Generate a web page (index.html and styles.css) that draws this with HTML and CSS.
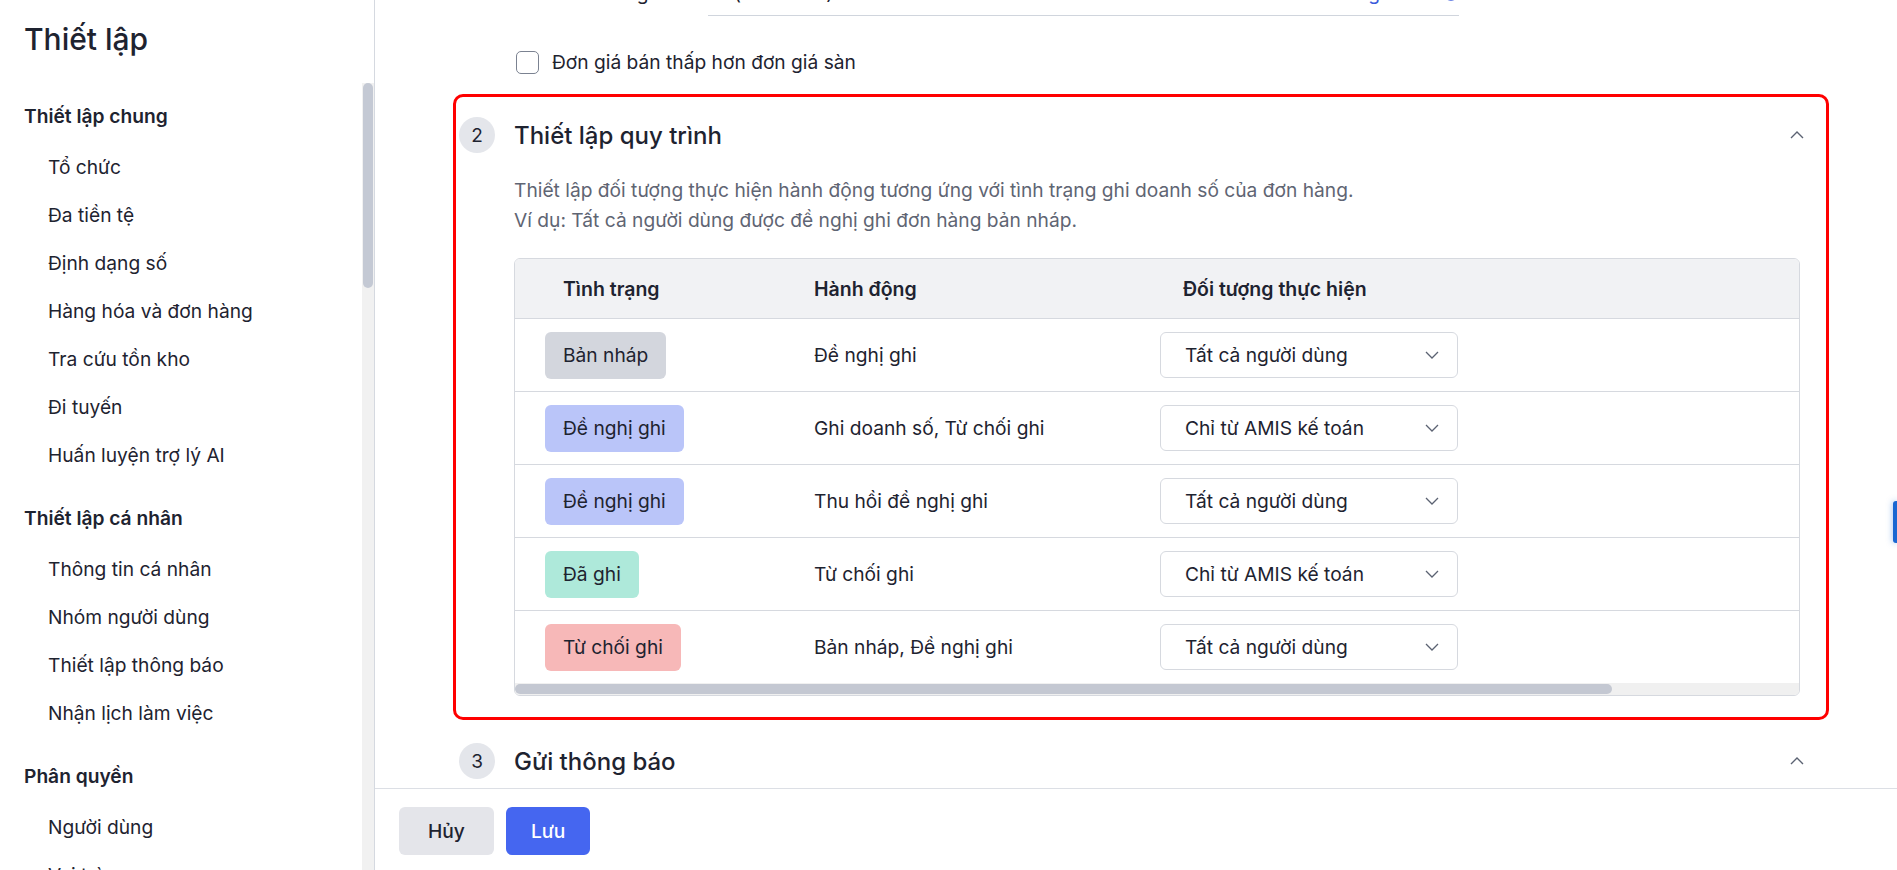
FILE: index.html
```html
<!DOCTYPE html>
<html lang="vi">

<head>
	<meta charset="utf-8">
	<title>Thiết lập</title>
	<link rel="stylesheet" href="styles.css">
</head>

<body>
	<div class="app">
		<aside class="sidebar">
			<h1 class="sidebar-title">Thiết lập</h1>
			<div class="menu-box">
				<nav class="menu">
					<div class="menu-group">
						<div class="menu-head">Thiết lập chung</div>
						<a class="menu-item">Tổ chức</a>
						<a class="menu-item">Đa tiền tệ</a>
						<a class="menu-item">Định dạng số</a>
						<a class="menu-item">Hàng hóa và đơn hàng</a>
						<a class="menu-item">Tra cứu tồn kho</a>
						<a class="menu-item">Đi tuyến</a>
						<a class="menu-item">Huấn luyện trợ lý AI</a>
					</div>
					<div class="menu-group">
						<div class="menu-head">Thiết lập cá nhân</div>
						<a class="menu-item">Thông tin cá nhân</a>
						<a class="menu-item">Nhóm người dùng</a>
						<a class="menu-item">Thiết lập thông báo</a>
						<a class="menu-item">Nhận lịch làm việc</a>
					</div>
					<div class="menu-group">
						<div class="menu-head">Phân quyền</div>
						<a class="menu-item">Người dùng</a>
						<a class="menu-item">Vai trò</a>
					</div>
				</nav>
				<div class="vscroll"><div class="vscroll-thumb"></div></div>
			</div>
		</aside>

		<main class="main">
			<div class="content">
				<div class="field-row">
					<span class="field-label">Kiểm tra đơn giá</span>
					<div class="field-input">
						<span>(theo ĐVT)</span>
						<span class="field-link">Cách tính giá sàn
							<svg width="16" height="16" viewBox="0 0 16 16">
								<circle cx="8" cy="8" r="7" fill="none" stroke="#3b5bdb" stroke-width="1.5" />
							</svg>
						</span>
					</div>
				</div>

				<label class="check-row">
					<span class="checkbox"></span>
					Đơn giá bán thấp hơn đơn giá sàn
				</label>

				<section class="step step-active">
					<div class="step-head">
						<span class="step-num">2</span>
						<h2 class="step-title">Thiết lập quy trình</h2>
						<svg class="step-toggle" width="16" height="10" viewBox="0 0 16 10">
							<path d="M2 8 L8 2 L14 8" fill="none" stroke="#5b6272" stroke-width="1.4" />
						</svg>
					</div>
					<p class="step-desc">Thiết lập đối tượng thực hiện hành động tương ứng với tình trạng ghi doanh số của đơn hàng.<br>Ví dụ: Tất cả người dùng được đề nghị ghi đơn hàng bản nháp.</p>

					<div class="table-wrap">
						<div class="table-view">
							<table class="flow-table">
								<colgroup>
									<col class="col-status">
									<col class="col-action">
									<col class="col-actor">
								</colgroup>
								<thead>
									<tr>
										<th class="th-status">Tình trạng</th>
										<th>Hành động</th>
										<th class="th-actor">Đối tượng thực hiện</th>
									</tr>
								</thead>
								<tbody>
									<tr>
										<td><div class="cell"><span class="badge badge-draft">Bản nháp</span></div></td>
										<td><div class="cell">Đề nghị ghi</div></td>
										<td><div class="cell"><div class="select">Tất cả người dùng<svg width="14" height="8" viewBox="0 0 14 8"><path d="M1 1 L7 7 L13 1" fill="none" stroke="#5b6272" stroke-width="1.3" /></svg></div></div></td>
									</tr>
									<tr>
										<td><div class="cell"><span class="badge badge-pending">Đề nghị ghi</span></div></td>
										<td><div class="cell">Ghi doanh số, Từ chối ghi</div></td>
										<td><div class="cell"><div class="select">Chỉ từ AMIS kế toán<svg width="14" height="8" viewBox="0 0 14 8"><path d="M1 1 L7 7 L13 1" fill="none" stroke="#5b6272" stroke-width="1.3" /></svg></div></div></td>
									</tr>
									<tr>
										<td><div class="cell"><span class="badge badge-pending">Đề nghị ghi</span></div></td>
										<td><div class="cell">Thu hồi đề nghị ghi</div></td>
										<td><div class="cell"><div class="select">Tất cả người dùng<svg width="14" height="8" viewBox="0 0 14 8"><path d="M1 1 L7 7 L13 1" fill="none" stroke="#5b6272" stroke-width="1.3" /></svg></div></div></td>
									</tr>
									<tr>
										<td><div class="cell"><span class="badge badge-done">Đã ghi</span></div></td>
										<td><div class="cell">Từ chối ghi</div></td>
										<td><div class="cell"><div class="select">Chỉ từ AMIS kế toán<svg width="14" height="8" viewBox="0 0 14 8"><path d="M1 1 L7 7 L13 1" fill="none" stroke="#5b6272" stroke-width="1.3" /></svg></div></div></td>
									</tr>
									<tr>
										<td><div class="cell"><span class="badge badge-rejected">Từ chối ghi</span></div></td>
										<td><div class="cell">Bản nháp, Đề nghị ghi</div></td>
										<td><div class="cell"><div class="select">Tất cả người dùng<svg width="14" height="8" viewBox="0 0 14 8"><path d="M1 1 L7 7 L13 1" fill="none" stroke="#5b6272" stroke-width="1.3" /></svg></div></div></td>
									</tr>
								</tbody>
							</table>
						</div>
						<div class="hscroll"><div class="hscroll-thumb"></div></div>
					</div>
				</section>

				<section class="step">
					<div class="step-head">
						<span class="step-num">3</span>
						<h2 class="step-title">Gửi thông báo</h2>
						<svg class="step-toggle" width="16" height="10" viewBox="0 0 16 10">
							<path d="M2 8 L8 2 L14 8" fill="none" stroke="#5b6272" stroke-width="1.4" />
						</svg>
					</div>
				</section>
			</div>

			<footer class="actions">
				<button class="btn btn-cancel">Hủy</button>
				<button class="btn btn-save">Lưu</button>
			</footer>
		</main>
	</div>
	<div class="side-tab"></div>
</body>

</html>
```

FILE: styles.css
```css
* {
	margin: 0;
	padding: 0;
	box-sizing: border-box;
}

html,
body {
	height: 100%;
}

body {
	font-family: Inter, "Noto Sans", sans-serif;
	font-size: 19.2px;
	color: #1e2330;
	background: #fff;
	overflow: hidden;
}

.app {
	display: flex;
	height: 100vh;
}

/* left menu */
.sidebar {
	width: 375px;
	flex: none;
	display: flex;
	flex-direction: column;
	border-right: 1px solid #d5d9e0;
}

.sidebar-title {
	height: 83px;
	padding: 19px 0 0 24px;
	font-size: 30px;
	line-height: 40px;
	font-weight: 500;
}

.menu-box {
	flex: 1;
	display: flex;
	min-height: 0;
}

.menu {
	flex: 1;
	overflow: hidden;
	padding: 6px 0 0 24px;
}

.vscroll {
	width: 12px;
	flex: none;
	background: #f1f1f1;
	padding: 0 1px;
}

.vscroll-thumb {
	height: 205px;
	border-radius: 6px;
	background: #c4c9d4;
}

.menu-group + .menu-group {
	margin-top: 12px;
}

.menu-head {
	height: 54px;
	line-height: 54px;
	font-weight: 600;
}

.menu-item {
	display: block;
	height: 48px;
	line-height: 48px;
	padding-left: 24px;
	cursor: pointer;
}

/* right side */
.main {
	flex: 1;
	display: flex;
	flex-direction: column;
	min-width: 0;
}

.content {
	flex: 1;
	overflow: hidden;
	padding: 0 68px 0 78px;
}

.field-row {
	display: flex;
	align-items: center;
	height: 46px;
	margin-top: -30px;
	padding-left: 63px;
}

.field-label {
	width: 192px;
}

.field-input {
	width: 751px;
	height: 46px;
	display: flex;
	align-items: center;
	justify-content: space-between;
	padding-left: 26px;
	border-bottom: 1px solid #d0d5dd;
}

.field-link {
	display: flex;
	align-items: center;
	gap: 10px;
	color: #3b5bdb;
}

.check-row {
	display: flex;
	align-items: center;
	gap: 13px;
	height: 30px;
	margin: 31px 0 17px;
	padding-left: 63px;
}

.checkbox {
	width: 23px;
	height: 23px;
	border: 1.5px solid #7b8291;
	border-radius: 5px;
}

/* steps */
.step {
	border: 3px solid transparent;
	border-radius: 10px;
	padding: 20px 26px 21px 3px;
}

.step-active {
	border-color: #ff0000;
}

.step-head {
	display: flex;
	align-items: center;
	height: 36px;
}

.step-num {
	width: 36px;
	height: 36px;
	border-radius: 50%;
	background: #e4e6eb;
	display: flex;
	align-items: center;
	justify-content: center;
	font-size: 19px;
}

.step-title {
	flex: 1;
	margin-left: 19px;
	font-size: 24px;
	font-weight: 500;
}

.step-toggle {
	margin-right: -5px;
}

.step-desc {
	margin: 22px 0 0 55px;
	line-height: 30px;
	color: #5f6573;
}

/* process table */
.table-wrap {
	margin: 23px 0 0 55px;
	border: 1px solid #d6d9df;
	border-radius: 6px;
	overflow: hidden;
}

.table-view {
	overflow: hidden;
}

.flow-table {
	width: 1505px;
	border-collapse: separate;
	border-spacing: 0;
	table-layout: fixed;
}

.col-status {
	width: 269px;
}

.col-action {
	width: 346px;
}

.flow-table th {
	height: 60px;
	padding-left: 30px;
	text-align: left;
	font-size: 19.5px;
	font-weight: 600;
	background: #f1f2f4;
	border-bottom: 1px solid #d6d9df;
}

.flow-table th.th-status {
	padding-left: 48px;
}

.flow-table th.th-actor {
	padding-left: 53px;
}

.flow-table td {
	padding: 0 0 0 30px;
	border-bottom: 1px solid #d6d9df;
}

.flow-table tr:last-child td {
	border-bottom: none;
}

.cell {
	height: 72px;
	display: flex;
	align-items: center;
}

.badge {
	display: inline-flex;
	align-items: center;
	height: 47px;
	padding: 0 18px;
	border-radius: 6px;
}

.badge-draft {
	background: #d3d6dd;
}

.badge-pending {
	background: #bac5f9;
}

.badge-done {
	background: #aee9da;
}

.badge-rejected {
	background: #f7b8b8;
}

.select {
	width: 298px;
	height: 46px;
	display: flex;
	align-items: center;
	justify-content: space-between;
	padding: 0 18px 0 24px;
	border: 1px solid #d6d9df;
	border-radius: 6px;
	background: #fff;
}

.hscroll {
	height: 12px;
	background: #f0f0f0;
	padding: 1px 0;
}

.hscroll-thumb {
	width: 85.4%;
	height: 100%;
	border-radius: 6px;
	background: #c4c8d2;
}

/* bottom bar */
.actions {
	flex: none;
	height: 82px;
	display: flex;
	gap: 12px;
	padding: 18px 24px 0;
	border-top: 1px solid #dcdfe5;
}

.btn {
	height: 48px;
	border: none;
	border-radius: 6px;
	font-family: inherit;
	font-size: 19.2px;
	font-weight: 500;
	cursor: pointer;
}

.btn-cancel {
	padding: 0 29px;
	background: #e4e5ea;
	color: #1e2330;
}

.btn-save {
	padding: 0 25px;
	background: #4566f0;
	color: #fff;
}

.side-tab {
	position: fixed;
	right: 0;
	top: 501px;
	width: 4px;
	height: 42px;
	background: #1967d2;
	border-radius: 3px 0 0 3px;
	box-shadow: 0 0 6px rgba(25, 103, 210, 0.5);
}
```
